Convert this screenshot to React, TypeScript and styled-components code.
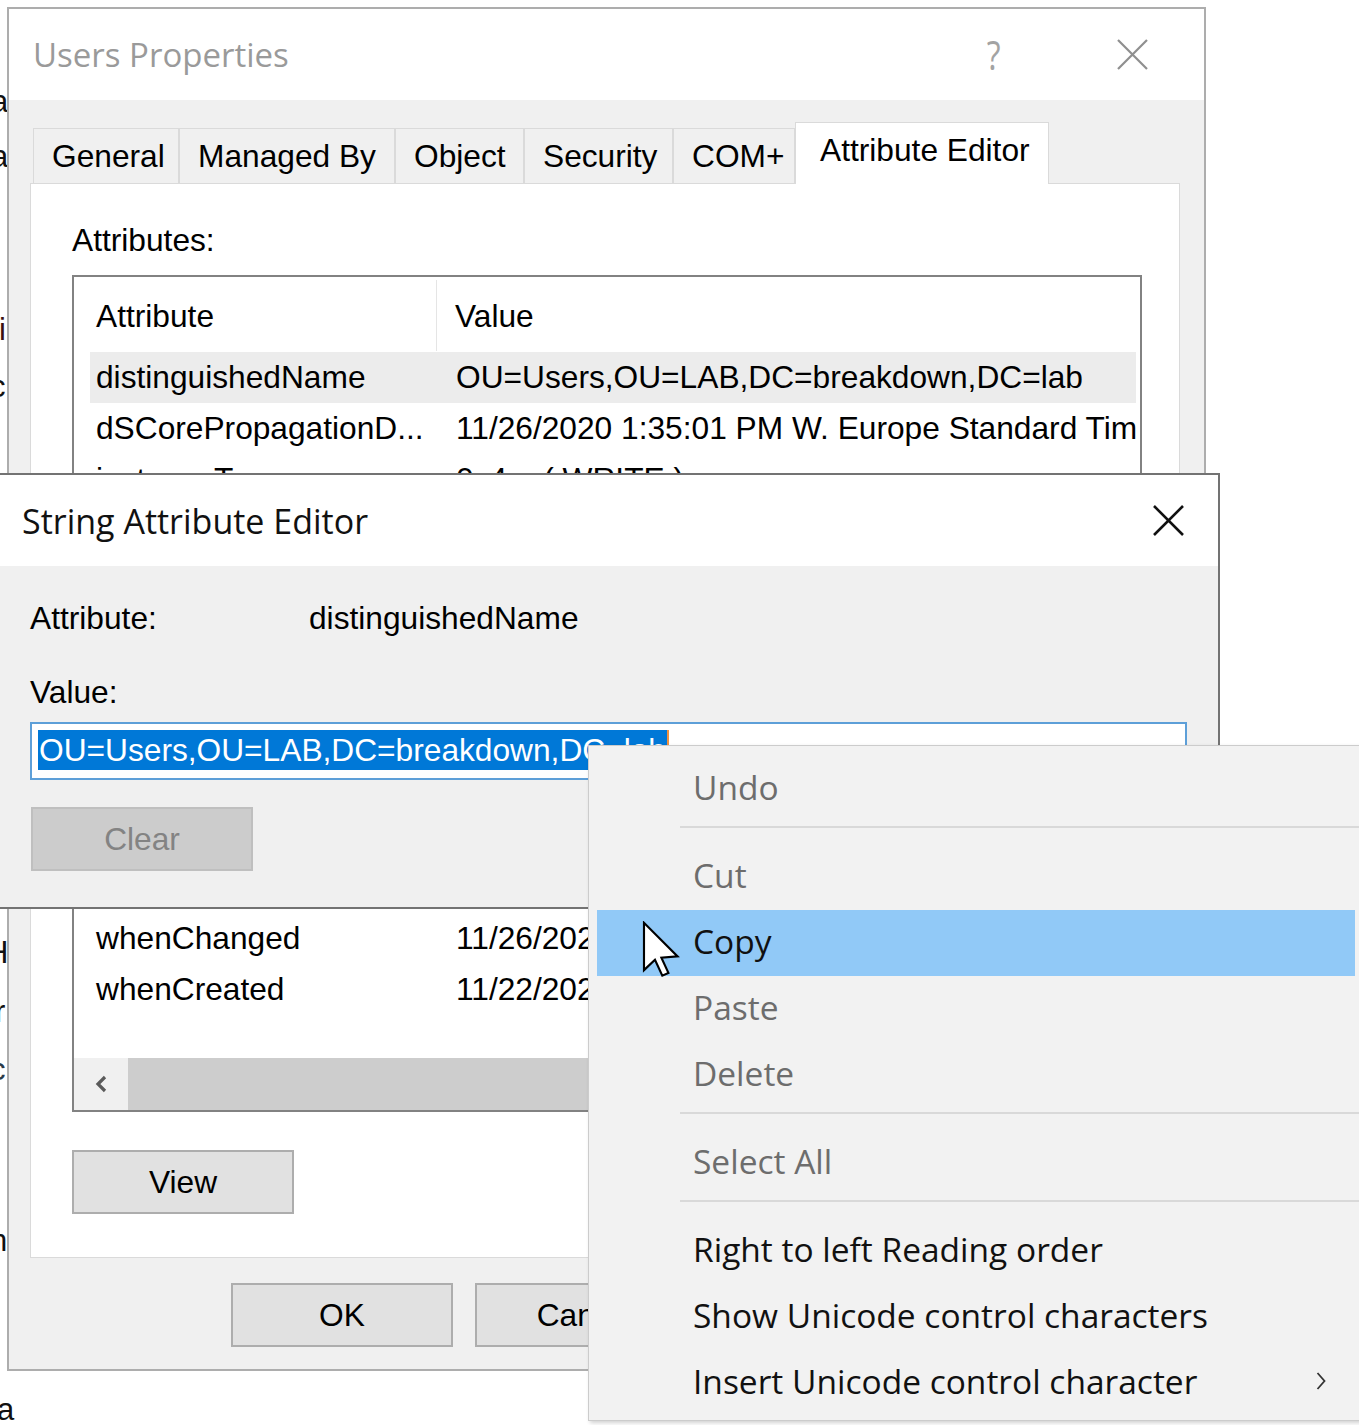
import React from "react";
import styled, { createGlobalStyle } from "styled-components";

const UI_FONT = `"Liberation Sans", Arial, sans-serif`;
const SEGOE = `"Open Sans", "Noto Sans", sans-serif`;

const GlobalStyle = createGlobalStyle`
  html, body { margin: 0; padding: 0; background: #ffffff; }
  body { font-family: ${UI_FONT}; }
  #root { width: 1359px; height: 1425px; overflow: hidden; }
`;

const Desktop = styled.div`
  position: relative;
  width: 1359px;
  height: 1425px;
  overflow: hidden;
  background: #ffffff;
  font-family: ${UI_FONT};
  color: #000;
`;

const BackGlyph = styled.span<{ $top: number; $left: number; $color?: string }>`
  position: absolute;
  top: ${(p) => p.$top}px;
  left: ${(p) => p.$left}px;
  font-size: 31px;
  line-height: 36px;
  color: ${(p) => p.$color ?? "#111"};
`;

/* ---------- generic window parts ---------- */

const TitleBar = styled.header<{ $height: number; $padLeft: number; $padRight: number }>`
  flex: 0 0 ${(p) => p.$height}px;
  display: flex;
  align-items: center;
  background: #ffffff;
  padding-left: ${(p) => p.$padLeft}px;
  padding-right: ${(p) => p.$padRight}px;
`;

const TitleText = styled.span<{ $inactive?: boolean }>`
  flex: 1;
  font-family: ${SEGOE};
  font-size: ${(p) => (p.$inactive ? 33 : 34)}px;
  white-space: nowrap;
  color: ${(p) => (p.$inactive ? "#9a9a9a" : "#111")};
`;

const TitleButton = styled.div<{ $gapRight?: number }>`
  width: 92px;
  height: 100%;
  margin-right: ${(p) => p.$gapRight ?? 0}px;
  display: flex;
  align-items: center;
  justify-content: center;
`;

const HelpGlyph = styled.span`
  font-family: ${SEGOE};
  font-size: 40px;
  color: #a3a3a3;
  line-height: 1;
  transform: scaleX(0.8);
`;

const FieldText = styled.div`
  font-size: 31.7px;
  line-height: 36px;
  white-space: nowrap;
`;

const PushButton = styled.div<{ $disabled?: boolean }>`
  flex: 0 0 auto;
  width: 222px;
  height: 64px;
  box-sizing: border-box;
  display: flex;
  align-items: center;
  justify-content: center;
  font-size: 31.7px;
  background: ${(p) => (p.$disabled ? "#cccccc" : "#e1e1e1")};
  border: 2px solid ${(p) => (p.$disabled ? "#bfbfbf" : "#adadad")};
  color: ${(p) => (p.$disabled ? "#838383" : "#000")};
`;

/* ---------- Users Properties ---------- */

const PropsWindow = styled.section`
  position: absolute;
  left: 7px;
  top: 7px;
  width: 1199px;
  height: 1364px;
  box-sizing: border-box;
  border: 2px solid #adadad;
  background: #f0f0f0;
  display: flex;
  flex-direction: column;
`;

const PropsBody = styled.div`
  flex: 1;
  display: flex;
  flex-direction: column;
  padding: 22px 24px 0 21px;
`;

const TabStrip = styled.div`
  flex: 0 0 61px;
  display: flex;
  align-items: flex-end;
  padding-left: 3px;
`;

const Tab = styled.div<{ $w: number; $selected?: boolean }>`
  position: relative;
  z-index: ${(p) => (p.$selected ? 2 : 1)};
  width: ${(p) => p.$w}px;
  height: ${(p) => (p.$selected ? 62 : 55)}px;
  margin-bottom: ${(p) => (p.$selected ? -1 : 0)}px;
  box-sizing: border-box;
  display: flex;
  align-items: center;
  padding-left: ${(p) => (p.$selected ? 24 : 18)}px;
  padding-bottom: ${(p) => (p.$selected ? 6 : 0)}px;
  font-size: 31.7px;
  white-space: nowrap;
  background: ${(p) => (p.$selected ? "#ffffff" : "#f0f0f0")};
  border: 1px solid #dadada;
  border-bottom: none;
`;

const TabPanel = styled.div`
  flex: 0 0 1075px;
  box-sizing: border-box;
  background: #ffffff;
  border: 1px solid #dadada;
  padding: 38px 37px 0 41px;
  display: flex;
  flex-direction: column;
`;

const ListBox = styled.div`
  margin-top: 17px;
  flex: 0 0 837px;
  box-sizing: border-box;
  border: 2px solid #828282;
  background: #ffffff;
  display: flex;
  flex-direction: column;
  overflow: hidden;
`;

const ListHeader = styled.div`
  flex: 0 0 75px;
  display: flex;
`;

const HeaderCell = styled.div<{ $w?: number; $divider?: boolean }>`
  ${(p) => (p.$w ? `flex: 0 0 ${p.$w}px;` : "flex: 1;")}
  box-sizing: border-box;
  display: flex;
  align-items: center;
  padding-left: ${(p) => (p.$divider ? 22 : 18)}px;
  padding-top: 2px;
  font-size: 31.7px;
  margin: 3px 0 1px;
  border-right: ${(p) => (p.$divider ? "1px solid #e5e5e5" : "none")};
`;

const RowsArea = styled.div`
  flex: 1;
  overflow: hidden;
`;

const ListRow = styled.div<{ $selected?: boolean }>`
  height: 51px;
  margin: 0 4px 0 16px;
  display: flex;
  align-items: center;
  overflow: hidden;
  background: ${(p) => (p.$selected ? "#ececec" : "transparent")};
  font-size: 31.7px;
  white-space: nowrap;
`;

const RowCell = styled.div<{ $w?: number }>`
  ${(p) => (p.$w ? `flex: 0 0 ${p.$w}px;` : "flex: 1;")}
  box-sizing: border-box;
  padding-left: ${(p) => (p.$w ? 6 : 19)}px;
  overflow: hidden;
  white-space: nowrap;
`;

const HScroll = styled.div`
  flex: 0 0 52px;
  display: flex;
  background: #f0f0f0;
`;

const ScrollArrow = styled.div`
  flex: 0 0 54px;
  display: flex;
  align-items: center;
  justify-content: center;
`;

const ScrollThumb = styled.div<{ $w: number }>`
  flex: 0 0 ${(p) => p.$w}px;
  background: #cdcdcd;
`;

const ScrollTrack = styled.div`
  flex: 1;
`;

const ButtonSlot = styled.div`
  margin-top: 38px;
  display: flex;
`;

const Footer = styled.div`
  display: flex;
  justify-content: flex-end;
  gap: 22px;
  padding-top: 25px;
  margin-right: -5px;
`;

/* ---------- String Attribute Editor ---------- */

const EditorWindow = styled.section`
  position: absolute;
  left: -2px;
  top: 473px;
  width: 1222px;
  height: 436px;
  box-sizing: border-box;
  border: 2px solid #737373;
  background: #f0f0f0;
  display: flex;
  flex-direction: column;
`;

const EditorBody = styled.div`
  flex: 1;
  display: flex;
  flex-direction: column;
  padding: 34px 31px 0 30px;
`;

const FieldRow = styled.div`
  display: flex;
`;

const FieldLabel = styled(FieldText)<{ $w?: number }>`
  ${(p) => (p.$w ? `flex: 0 0 ${p.$w}px;` : "")}
`;

const ValueLabel = styled(FieldText)`
  margin-top: 38px;
`;

const TextBox = styled.div`
  margin-top: 12px;
  height: 58px;
  box-sizing: border-box;
  border: 2px solid #5d9fd8;
  background: #ffffff;
  padding: 6px 6px;
  display: flex;
  align-items: flex-start;
  overflow: hidden;
`;

const Selection = styled.span`
  display: inline-block;
  height: 40px;
  line-height: 40px;
  padding: 0 1px;
  font-size: 31.7px;
  white-space: nowrap;
  background: #0078d7;
  color: #ffffff;
  border-right: 2px solid #f0913f;
`;

const EditorButtons = styled.div`
  margin-top: 27px;
  display: flex;
  gap: 23px;
  padding-left: 1px;
`;

const Spacer = styled.div`
  flex: 1;
`;

/* ---------- Context menu ---------- */

const ContextMenu = styled.div`
  position: absolute;
  left: 588px;
  top: 745px;
  width: 776px;
  box-sizing: border-box;
  border: 1px solid #cccccc;
  background: #f2f2f2;
  padding: 10px 0 4px;
  box-shadow: 2px 2px 4px rgba(0, 0, 0, 0.18);
  font-family: ${SEGOE};
`;

const MenuItem = styled.div<{ $disabled?: boolean; $active?: boolean }>`
  height: 66px;
  margin: 0 8px;
  box-sizing: border-box;
  display: flex;
  align-items: center;
  padding: 0 29px 4px 96px;
  font-size: 33.5px;
  white-space: nowrap;
  color: ${(p) => (p.$disabled ? "#6d6d6d" : "#111")};
  background: ${(p) => (p.$active ? "#91c9f7" : "transparent")};
`;

const MenuLabel = styled.span`
  flex: 1;
`;

const MenuSeparator = styled.div`
  height: 22px;
  box-sizing: border-box;
  padding: 4px 0 0 91px;
  &::after {
    content: "";
    display: block;
    height: 2px;
    background: #d9d9d9;
  }
`;

const Pointer = styled.svg`
  position: absolute;
  left: 642px;
  top: 921px;
`;

/* ---------- data ---------- */

const tabs = [
  { label: "General", w: 146 },
  { label: "Managed By", w: 216 },
  { label: "Object", w: 129 },
  { label: "Security", w: 149 },
  { label: "COM+", w: 122 },
  { label: "Attribute Editor", w: 254, selected: true },
];

const rows: { name: string; value: string; selected?: boolean }[] = [
  { name: "distinguishedName", value: "OU=Users,OU=LAB,DC=breakdown,DC=lab", selected: true },
  { name: "dSCorePropagationD...", value: "11/26/2020 1:35:01 PM W. Europe Standard Time" },
  { name: "instanceType", value: "0x4 = ( WRITE )" },
  { name: "name", value: "Users" },
  { name: "nTSecurityDescriptor", value: "D:AI(A;;LCRPLORC;;;ED)(A;;CCDCLCSWRPWPDTLOCRSDRCWDWO;;;DA)" },
  { name: "objectCategory", value: "CN=Organizational-Unit,CN=Schema,CN=Configuration,DC=breakdown,DC=lab" },
  { name: "objectClass", value: "top; organizationalUnit" },
  { name: "objectGUID", value: "5d1c6e0a-3f2b-4b8e-9a71-0c2d4e6f8a10" },
  { name: "ou", value: "Users" },
  { name: "uSNChanged", value: "12873" },
  { name: "uSNCreated", value: "12871" },
  { name: "whenChanged", value: "11/26/2020 1:35:01 PM W. Europe Standard Time" },
  { name: "whenCreated", value: "11/22/2020 3:12:44 PM W. Europe Standard Time" },
];

type MenuEntry =
  | { sep: true }
  | { label: string; disabled?: boolean; active?: boolean; submenu?: boolean };

const menu: MenuEntry[] = [
  { label: "Undo", disabled: true },
  { sep: true },
  { label: "Cut", disabled: true },
  { label: "Copy", active: true },
  { label: "Paste", disabled: true },
  { label: "Delete", disabled: true },
  { sep: true },
  { label: "Select All", disabled: true },
  { sep: true },
  { label: "Right to left Reading order" },
  { label: "Show Unicode control characters" },
  { label: "Insert Unicode control character", submenu: true },
];

const backGlyphs = [
  { ch: "a", top: 84, left: -9 },
  { ch: "a", top: 139, left: -9 },
  { ch: "i", top: 312, left: -1, color: "#3a1010" },
  { ch: "c", top: 369, left: -10 },
  { ch: "H", top: 935, left: -14 },
  { ch: "r", top: 994, left: -5 },
  { ch: "c", top: 1052, left: -10, color: "#2a3a48" },
  { ch: "n", top: 1223, left: -10 },
  { ch: "a", top: 1392, left: -3 },
];

/* ---------- icons ---------- */

const CloseIcon = ({ color, stroke }: { color: string; stroke: number }) => (
  <svg width="31" height="31" viewBox="0 0 31 31">
    <path d="M1 1 L30 30 M30 1 L1 30" stroke={color} strokeWidth={stroke} fill="none" />
  </svg>
);

const ChevronLeft = () => (
  <svg width="12" height="18" viewBox="0 0 12 18">
    <path d="M10 2 L3 9 L10 16" stroke="#5a5a5a" strokeWidth="3.2" fill="none" />
  </svg>
);

const ChevronRight = () => (
  <svg width="10" height="20" viewBox="0 0 10 20">
    <path d="M1.5 2 L8.5 10 L1.5 18" stroke="#333" strokeWidth="1.8" fill="none" />
  </svg>
);

/* ---------- app ---------- */

export default function App() {
  return (
    <>
      <GlobalStyle />
      <Desktop>
        {backGlyphs.map((g, i) => (
          <BackGlyph key={i} $top={g.top} $left={g.left} $color={g.color}>
            {g.ch}
          </BackGlyph>
        ))}

        <PropsWindow>
          <TitleBar $height={91} $padLeft={24} $padRight={26}>
            <TitleText $inactive>Users Properties</TitleText>
            <TitleButton $gapRight={46}>
              <HelpGlyph>?</HelpGlyph>
            </TitleButton>
            <TitleButton>
              <CloseIcon color="#8f8f8f" stroke={2.2} />
            </TitleButton>
          </TitleBar>
          <PropsBody>
            <TabStrip>
              {tabs.map((t) => (
                <Tab key={t.label} $w={t.w} $selected={t.selected}>
                  {t.label}
                </Tab>
              ))}
            </TabStrip>
            <TabPanel>
              <FieldText>Attributes:</FieldText>
              <ListBox>
                <ListHeader>
                  <HeaderCell $w={363} $divider>
                    Attribute
                  </HeaderCell>
                  <HeaderCell>Value</HeaderCell>
                </ListHeader>
                <RowsArea>
                  {rows.map((r) => (
                    <ListRow key={r.name} $selected={r.selected}>
                      <RowCell $w={347}>{r.name}</RowCell>
                      <RowCell>{r.value}</RowCell>
                    </ListRow>
                  ))}
                </RowsArea>
                <HScroll>
                  <ScrollArrow>
                    <ChevronLeft />
                  </ScrollArrow>
                  <ScrollThumb $w={640} />
                  <ScrollTrack />
                  <ScrollArrow />
                </HScroll>
              </ListBox>
              <ButtonSlot>
                <PushButton>View</PushButton>
              </ButtonSlot>
            </TabPanel>
            <Footer>
              <PushButton>OK</PushButton>
              <PushButton>Cancel</PushButton>
              <PushButton $disabled>Apply</PushButton>
              <PushButton>Help</PushButton>
            </Footer>
          </PropsBody>
        </PropsWindow>

        <EditorWindow>
          <TitleBar $height={91} $padLeft={22} $padRight={4}>
            <TitleText>String Attribute Editor</TitleText>
            <TitleButton>
              <CloseIcon color="#111" stroke={2.6} />
            </TitleButton>
          </TitleBar>
          <EditorBody>
            <FieldRow>
              <FieldLabel $w={279}>Attribute:</FieldLabel>
              <FieldLabel>distinguishedName</FieldLabel>
            </FieldRow>
            <ValueLabel>Value:</ValueLabel>
            <TextBox>
              <Selection>OU=Users,OU=LAB,DC=breakdown,DC=lab</Selection>
            </TextBox>
            <EditorButtons>
              <PushButton $disabled>Clear</PushButton>
              <Spacer />
              <PushButton>OK</PushButton>
              <PushButton>Cancel</PushButton>
            </EditorButtons>
          </EditorBody>
        </EditorWindow>

        <ContextMenu>
          {menu.map((m, i) =>
            "sep" in m ? (
              <MenuSeparator key={i} />
            ) : (
              <MenuItem key={i} $disabled={m.disabled} $active={m.active}>
                <MenuLabel>{m.label}</MenuLabel>
                {m.submenu && <ChevronRight />}
              </MenuItem>
            )
          )}
        </ContextMenu>

        <Pointer width="40" height="58" viewBox="0 0 13 19">
          <path
            d="M0.6 0.6 L0.6 16.1 L4.2 12.7 L6.6 17.9 L8.6 17 L6.3 12 L11.6 11.6 Z"
            fill="#ffffff"
            stroke="#000000"
            strokeWidth="0.7"
            strokeLinejoin="miter"
          />
        </Pointer>
      </Desktop>
    </>
  );
}
